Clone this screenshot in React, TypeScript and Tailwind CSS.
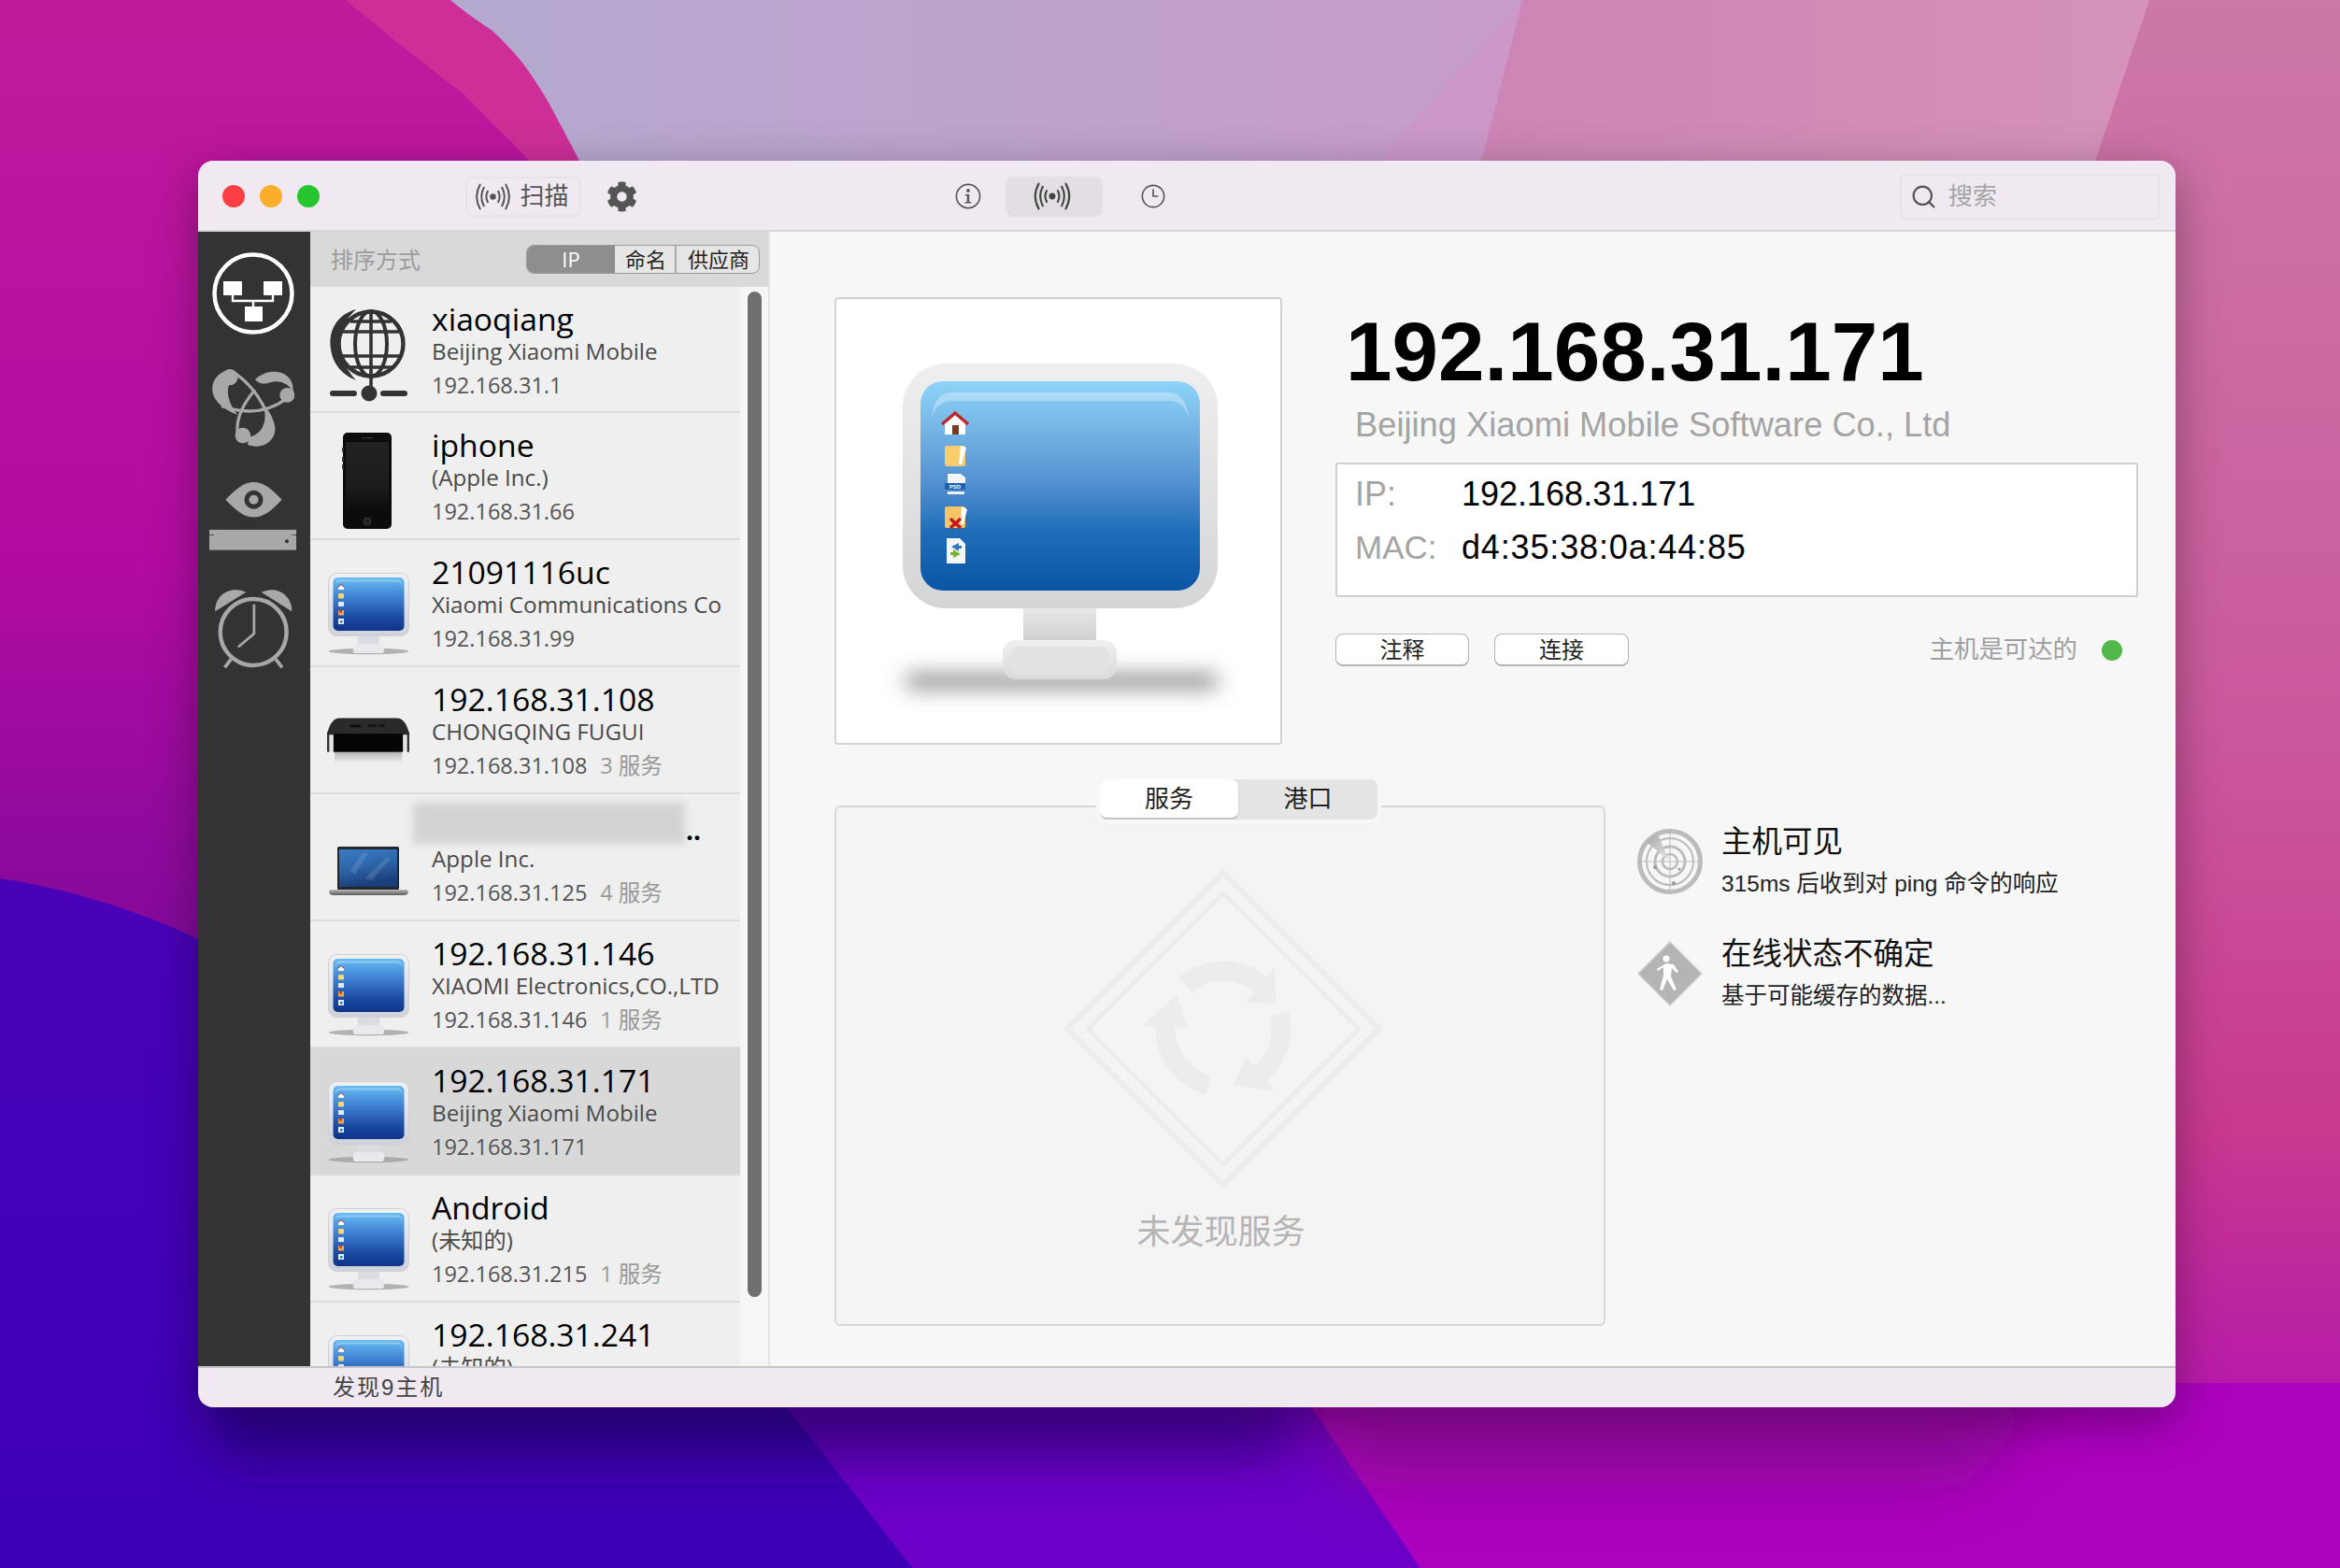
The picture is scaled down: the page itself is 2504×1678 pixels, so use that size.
import React from "react";
import { FaCog } from "react-icons/fa";
import { Clock3, Search } from "lucide-react";

function polar(a: number, r: number) {
  const t = ((a - 90) * Math.PI) / 180;
  return [170 + r * Math.cos(t), 170 + r * Math.sin(t)];
}

function arcArrow(from: number, to: number, tip: number) {
  const r = 62;
  const [x1, y1] = polar(from, r);
  const [x2, y2] = polar(to, r);
  const [ax, ay] = polar(to, r + 24);
  const [bx, by] = polar(to, r - 24);
  const [tx, ty] = polar(tip, r);
  return (
    <g>
      <path d={`M${x1} ${y1} A${r} ${r} 0 0 1 ${x2} ${y2}`} fill="none" stroke="#ececec" strokeWidth="21" />
      <path d={`M${ax} ${ay} L${bx} ${by} L${tx} ${ty}Z`} fill="#ececec" />
    </g>
  );
}

function Wallpaper() {
  return (
    <svg className="absolute inset-0" width="2504" height="1678" viewBox="0 0 2504 1678">
      <defs>
        <linearGradient id="lav" x1="0" y1="0" x2="1" y2="0">
          <stop offset="0" stopColor="#b4a9cf" />
          <stop offset="1" stopColor="#c79cc9" />
        </linearGradient>
        <linearGradient id="leftv" x1="0" y1="0" x2="0" y2="1">
          <stop offset="0" stopColor="#c01a9c" />
          <stop offset="0.6" stopColor="#b20ba2" />
          <stop offset="1" stopColor="#820a9a" />
        </linearGradient>
        <linearGradient id="rightv" x1="0" y1="0" x2="0" y2="1">
          <stop offset="0" stopColor="#cd78a9" />
          <stop offset="0.45" stopColor="#cb5a9d" />
          <stop offset="0.72" stopColor="#c8398f" />
          <stop offset="1" stopColor="#ad05bb" />
        </linearGradient>
        <linearGradient id="pinkv" x1="0" y1="0" x2="1" y2="0">
          <stop offset="0" stopColor="#cd85b6" />
          <stop offset="1" stopColor="#d592ba" />
        </linearGradient>
        <linearGradient id="blue" x1="0" y1="0" x2="0" y2="1">
          <stop offset="0" stopColor="#4a02b8" />
          <stop offset="1" stopColor="#3d00b5" />
        </linearGradient>
        <filter id="soft" x="-20%" y="-300%" width="140%" height="700%">
          <feGaussianBlur stdDeviation="30" />
        </filter>
      </defs>
      <rect width="2504" height="1678" fill="url(#rightv)" />
      <path d="M0 0H640V1010H212L0 940Z" fill="url(#leftv)" />
      <path d="M370 0L431 50L495 100L567 172V200H640V0Z" fill="#cd2f97" />
      <path d="M482 0C500 15 515 25 527 33C540 45 550 56 559 67C572 85 582 100 591 117C603 140 612 156 620 172V190H1640V0Z" fill="url(#lav)" />
      <path d="M1629 0L1581 190H1460Z" fill="#cb98c8" />
      <path d="M1629 0H2300L2236 190H1581Z" fill="url(#pinkv)" />
      <path d="M0 940C70 950 150 975 212 1005L822 1480L977 1678H0Z" fill="url(#blue)" />
      <path d="M822 1480H1386L1520 1678H977Z" fill="#6d00c8" />
      <path d="M1386 1480H2504V1678H1520Z" fill="#ab02bd" />
      <path d="M1390 1500H2200L2100 1590H1450Z" fill="#7b1184" opacity="0.6" filter="url(#soft)" />
      <path d="M230 1500H1380V1560H230Z" fill="#1c0060" opacity="0.6" filter="url(#soft)" />
    </svg>
  );
}

function Broadcast({ className }: { className?: string }) {
  return (
    <svg className={className} viewBox="0 0 40 28" fill="none" stroke="currentColor" strokeWidth="2" strokeLinecap="round">
      <circle cx="20" cy="14" r="3.2" fill="currentColor" stroke="none" />
      <path d="M14.5 8.5Q11.5 14 14.5 19.5M25.5 8.5Q28.5 14 25.5 19.5" />
      <path d="M10.5 4.5Q5.5 14 10.5 23.5M29.5 4.5Q34.5 14 29.5 23.5" />
      <path d="M6.5 1.5Q-0.5 14 6.5 26.5M33.5 1.5Q40.5 14 33.5 26.5" />
    </svg>
  );
}

function InfoIcon() {
  return (
    <svg className="w-[28px] h-[28px] text-[#555]" viewBox="0 0 28 28" fill="none">
      <circle cx="14" cy="14" r="12.6" stroke="currentColor" strokeWidth="1.6" />
      <circle cx="14" cy="8" r="1.9" fill="currentColor" />
      <path d="M10.8 12H15.2V20H17.4V21.4H10.6V20H12.8V13.4H10.8Z" fill="currentColor" />
    </svg>
  );
}

function NetworkIcon() {
  return (
    <svg className="w-[90px] h-[90px]" viewBox="0 0 90 90" fill="none">
      <circle cx="45" cy="45" r="41.5" stroke="#fff" strokeWidth="4.5" />
      <rect x="13" y="32" width="20" height="15" fill="#fff" />
      <rect x="56" y="32" width="20" height="15" fill="#fff" />
      <rect x="36" y="59" width="19" height="16" fill="#fff" />
      <path d="M23 45V53H66V45M45 53V60" stroke="#fff" strokeWidth="2.4" />
    </svg>
  );
}

function TrefoilIcon() {
  return (
    <svg className="w-[88px] h-[83px] mt-[36px]" viewBox="48 462 265 248" fill="#a8a8a8">
      <path d="M88 468C36 490 22 568 130 608C105 578 92 540 102 512Z" />
      <path d="M186 494C240 446 318 472 308 535C298 510 265 492 228 506C212 510 198 508 186 494Z" />
      <path d="M162 704C218 728 270 680 244 625C236 600 226 588 216 588C226 640 204 672 168 680Z" />
      <path d="M118 472C172 508 218 570 242 652" fill="none" stroke="#a8a8a8" strokeWidth="10" />
      <path d="M288 556C240 592 170 612 78 580" fill="none" stroke="#a8a8a8" strokeWidth="10" />
      <path d="M186 528C150 570 124 620 130 668" fill="none" stroke="#a8a8a8" strokeWidth="10" />
      <circle cx="105" cy="487" r="26" />
      <circle cx="290" cy="545" r="24" />
      <circle cx="147" cy="675" r="25" />
    </svg>
  );
}

function EyeServerIcon() {
  return (
    <svg className="w-[93px] h-[73px] mt-[38px]" viewBox="40 828 278 218">
      <path d="M92 884C125 850 150 828 182 828C214 828 240 850 272 884C240 918 214 940 182 940C150 940 125 918 92 884Z" fill="#a8a8a8" />
      <circle cx="182" cy="884" r="30" fill="#333" />
      <circle cx="182" cy="884" r="15" fill="#a8a8a8" />
      <rect x="40" y="980" width="278" height="65" fill="#a8a8a8" />
      <path d="M40 997H55M303 997H318" stroke="#555" strokeWidth="3" />
      <circle cx="288" cy="1017" r="6" fill="#333" />
    </svg>
  );
}

function AlarmIcon() {
  return (
    <svg className="w-[84px] h-[88px] mt-[38px]" viewBox="55 1170 245 258" fill="none">
      <circle cx="178" cy="1315" r="104" stroke="#a8a8a8" strokeWidth="13" />
      <path d="M180 1228V1320L130 1362" stroke="#a8a8a8" strokeWidth="8" />
      <path d="M58 1250C55 1205 100 1165 155 1190Z" fill="#a8a8a8" />
      <path d="M298 1250C302 1205 255 1165 203 1190Z" fill="#a8a8a8" />
      <path d="M108 1400L88 1426M248 1400L268 1426" stroke="#a8a8a8" strokeWidth="11" />
    </svg>
  );
}

function GlobeIcon() {
  return (
    <svg className="w-[83px] h-[103px] mt-[21px]" viewBox="0 0 83 103" fill="none" stroke="#333">
      <path d="M28 3C6 9-2 28 1 46C3 61 13 73 28 79C17 67 11 54 11 40C11 26 17 13 28 3Z" fill="#333" stroke="none" />
      <circle cx="44" cy="40" r="34.5" strokeWidth="4.4" />
      <ellipse cx="44" cy="40" rx="17" ry="35" strokeWidth="4" />
      <path d="M44 5V92M12 27H76M12 53H76M22 16H66M22 65H66" strokeWidth="3.6" />
      <circle cx="42" cy="93" r="8.5" fill="#333" stroke="none" />
      <rect x="0" y="90" width="29" height="6" rx="3" fill="#333" stroke="none" />
      <rect x="54" y="90" width="29" height="6" rx="3" fill="#333" stroke="none" />
    </svg>
  );
}

function PhoneIcon() {
  return (
    <svg className="w-[54px] h-[104px] mt-[21px] -ml-[2px]" viewBox="0 0 54 104">
      <defs>
        <linearGradient id="ph" x1="0" y1="0" x2="0" y2="1">
          <stop offset="0" stopColor="#222" />
          <stop offset="0.6" stopColor="#1c1c1c" />
          <stop offset="1" stopColor="#0a0a0a" />
        </linearGradient>
      </defs>
      <rect x="1" y="0" width="52" height="103" rx="5" fill="#0c0c0c" />
      <rect x="4" y="10" width="46" height="78" fill="url(#ph)" />
      <rect x="0" y="16" width="2" height="5" fill="#333" />
      <rect x="0" y="26" width="2" height="5" fill="#333" />
      <rect x="0" y="34" width="2" height="5" fill="#333" />
      <circle cx="27" cy="95" r="4" fill="#222" stroke="#3a3a3a" />
      <rect x="21" y="5" width="12" height="1.4" fill="#333" />
    </svg>
  );
}

function SmallMonitor() {
  return (
    <svg className="w-[87px] h-[89px] mt-[35px]" viewBox="0 0 87 89">
      <defs>
        <linearGradient id="sm" x1="0" y1="0" x2="0" y2="1">
          <stop offset="0" stopColor="#66bdf2" />
          <stop offset="0.35" stopColor="#4184d4" />
          <stop offset="0.75" stopColor="#1b4aa3" />
          <stop offset="1" stopColor="#0f3488" />
        </linearGradient>
        <linearGradient id="smf" x1="0" y1="0" x2="0" y2="1">
          <stop offset="0" stopColor="#f0f1f5" />
          <stop offset="1" stopColor="#cfd2da" />
        </linearGradient>
      </defs>
      <ellipse cx="43.5" cy="84" rx="43" ry="3.2" fill="#9c9c9c" opacity="0.75" />
      <rect x="0.5" y="0.5" width="86" height="67" rx="9" fill="url(#smf)" stroke="#cfcfd6" />
      <rect x="5.5" y="5" width="76" height="57" rx="5" fill="url(#sm)" />
      <path d="M8 13C8 9 10 7.5 13 7.5H74C77 7.5 79 9 79 13C78 10 76 9.5 74 9.5H13C11 9.5 9 10 8 13Z" fill="#fff" opacity="0.3" />
      <path d="M11 15.5L14 13L17 15.5V18H11Z" fill="#fff" />
      <path d="M10.5 15.5L14 12.5L17.5 15.5" fill="none" stroke="#b33" strokeWidth="1" />
      <rect x="11" y="22" width="6" height="5.5" rx="1" fill="#f4d675" />
      <rect x="11" y="31" width="6" height="5" fill="#dfe9f5" />
      <rect x="11" y="40" width="6" height="5.5" fill="#f2a54a" />
      <rect x="12" y="40" width="3" height="2.5" fill="#d33" />
      <rect x="11" y="49" width="6" height="6" fill="#e8eff7" />
      <rect x="13" y="51" width="2.5" height="2.5" fill="#2a7ac4" />
      <rect x="32" y="68" width="23" height="9" fill="#dcdde2" />
      <rect x="27" y="76" width="33" height="10" rx="2" fill="#e8e9ed" />
    </svg>
  );
}

function Laptop() {
  return (
    <svg className="w-[85px] h-[52px] mt-[56px]" viewBox="0 0 85 52">
      <defs>
        <linearGradient id="lp" x1="0" y1="0" x2="0.3" y2="1">
          <stop offset="0" stopColor="#3a7cc4" />
          <stop offset="0.5" stopColor="#2e66ab" />
          <stop offset="1" stopColor="#1b3f7a" />
        </linearGradient>
        <linearGradient id="lb" x1="0" y1="0" x2="0" y2="1">
          <stop offset="0" stopColor="#bbb" />
          <stop offset="1" stopColor="#5a5a5a" />
        </linearGradient>
      </defs>
      <rect x="9" y="0" width="66" height="46" rx="1.5" fill="#23262c" />
      <rect x="11" y="3" width="62" height="40" fill="url(#lp)" />
      <path d="M22 26L36 7L42 7L28 30ZM38 34L62 11L66 13L46 36Z" fill="#fff" opacity="0.12" />
      <path d="M1 46H84L85 49C85 50 83 52 80 52H5C2 52 0 50 0 49Z" fill="url(#lb)" />
    </svg>
  );
}

function AppleTv() {
  return (
    <svg className="w-[88px] h-[50px] mt-[54px]" viewBox="0 0 90 50">
      <defs>
        <linearGradient id="tvr" x1="0" y1="0" x2="0" y2="1">
          <stop offset="0" stopColor="#b5b5b5" />
          <stop offset="1" stopColor="#efefef" />
        </linearGradient>
      </defs>
      <rect x="8" y="37" width="74" height="12" fill="url(#tvr)" />
      <rect x="2" y="14" width="86" height="22" fill="#e4e4e4" />
      <rect x="0" y="15" width="2.4" height="22" fill="#333" />
      <rect x="87.6" y="15" width="2.4" height="22" fill="#333" />
      <path d="M0 18C2 8 6 0 14 0H76C84 0 88 8 90 18Z" fill="#2a2a2a" />
      <rect x="7" y="17" width="76" height="20" fill="#050505" />
      <rect x="25" y="7" width="12" height="3" rx="1.5" fill="#0a0a0a" />
      <rect x="45" y="7" width="9" height="2.4" fill="#111" />
      <rect x="56" y="7" width="7" height="2.4" fill="#111" />
    </svg>
  );
}

function BigMonitor() {
  return (
    <svg className="w-[339px] h-[361px] overflow-visible" viewBox="0 0 339 361">
      <defs>
        <linearGradient id="bf" x1="0" y1="0" x2="0" y2="1">
          <stop offset="0" stopColor="#efefef" />
          <stop offset="1" stopColor="#d4d5d7" />
        </linearGradient>
        <linearGradient id="bs" x1="0" y1="0" x2="0" y2="1">
          <stop offset="0" stopColor="#8dd4f8" />
          <stop offset="0.2" stopColor="#78b9e7" />
          <stop offset="0.5" stopColor="#508fd0" />
          <stop offset="0.72" stopColor="#1f6db8" />
          <stop offset="1" stopColor="#0b55a5" />
        </linearGradient>
        <linearGradient id="bt" x1="0" y1="0" x2="0" y2="1">
          <stop offset="0" stopColor="#e8e8e8" />
          <stop offset="1" stopColor="#cfcfcf" />
        </linearGradient>
        <linearGradient id="bb" x1="0" y1="0" x2="0" y2="1">
          <stop offset="0" stopColor="#f0f0f0" />
          <stop offset="1" stopColor="#d9d9d9" />
        </linearGradient>
        <filter id="bshadow" x="-10%" y="-250%" width="120%" height="600%">
          <feGaussianBlur stdDeviation="11" />
        </filter>
      </defs>
      <rect x="2" y="332" width="336" height="16" rx="8" fill="#888" filter="url(#bshadow)" />
      <rect x="0" y="0" width="337" height="262" rx="46" fill="url(#bf)" />
      <rect x="19" y="19" width="299" height="224" rx="24" fill="url(#bs)" />
      <path d="M31 59C32 42 38 31 54 31H284C298 31 305 42 306 59C303 48 298 40 284 40H54C40 40 34 48 31 59Z" fill="#fff" opacity="0.3" />
      <rect x="129" y="262" width="78" height="34" fill="url(#bt)" />
      <rect x="107" y="296" width="122" height="42" rx="14" fill="url(#bb)" />
      <rect x="115" y="303" width="106" height="30" rx="9" fill="#e2e2e2" />
      {/* mini desktop icons */}
      <path d="M45 64L56 55L67 64V76H45Z" fill="#fff" />
      <path d="M42 65L56 53L70 65" fill="none" stroke="#c0272d" strokeWidth="3.4" />
      <rect x="53" y="66" width="7" height="10" fill="#7a3b22" />
      <rect x="45" y="88" width="22" height="22" rx="2" fill="#f7cd6e" />
      <path d="M62 88L68 90L63 108H60Z" fill="#fff" />
      <path d="M48 118H62L67 122V128H48Z" fill="#f2f4f7" />
      <rect x="45" y="128" width="22" height="7" fill="#1f5fae" />
      <rect x="48" y="137" width="18" height="3" fill="#eef1f5" />
      <text x="56" y="134" textAnchor="middle" fontSize="6" fontWeight="700" fill="#fff" fontFamily="Liberation Sans">PSD</text>
      <rect x="45" y="153" width="22" height="23" rx="2" fill="#f4c566" />
      <path d="M63 153L69 156L65 172L62 172Z" fill="#fff" />
      <path d="M51 166L62 176M62 166L51 176" stroke="#c4161c" strokeWidth="3.4" />
      <path d="M47 187H61L67 193V214H47Z" fill="#f4f6f8" />
      <path d="M52 196L60 192V195H63V198H60V201Z" fill="#2b7cc4" />
      <path d="M62 204L54 208V205H51V202H54V199Z" fill="#78b43a" />
    </svg>
  );
}

function RadarIcon() {
  return (
    <svg className="w-[70px] h-[70px] mt-[6px] shrink-0" viewBox="0 0 70 70" fill="none" stroke="#bbb">
      <defs>
        <linearGradient id="rw" x1="0" y1="0" x2="1" y2="1">
          <stop offset="0" stopColor="#a9a9a9" />
          <stop offset="1" stopColor="#e6e6e6" />
        </linearGradient>
      </defs>
      <circle cx="35" cy="35" r="32.5" strokeWidth="5" />
      <circle cx="35" cy="35" r="25" strokeWidth="2" />
      <circle cx="35" cy="35" r="16" strokeWidth="3" />
      <circle cx="35" cy="35" r="8" strokeWidth="2.5" />
      <path d="M35 3V67M3 35H67" strokeWidth="1" />
      <path d="M35 35L10 14A32 32 0 0 1 22 6Z" fill="url(#rw)" stroke="none" />
      <circle cx="19" cy="41" r="2" fill="#999" stroke="none" />
      <circle cx="45" cy="43" r="1.6" fill="#999" stroke="none" />
      <circle cx="39" cy="58" r="2" fill="#999" stroke="none" />
    </svg>
  );
}

function WalkIcon() {
  return (
    <svg className="w-[70px] h-[70px] mt-[6px] shrink-0" viewBox="0 0 70 70">
      <path d="M35 1L69 35L35 69L1 35Z" fill="#b4b4b4" stroke="#d0d0d0" strokeWidth="1.5" strokeLinejoin="round" />
      <circle cx="31" cy="19" r="3.6" fill="#fff" />
      <path d="M31 24L39 25L44 33L42 34L37 29L36 38L42 52L39 53L32 41L27 53L24 52L28 37L28 28L22 32L21 30Z" fill="#fff" />
    </svg>
  );
}

function DiamondArt() {
  return (
    <svg className="ml-[6px] w-[340px] h-[340px]" viewBox="0 0 340 340" fill="none">
      <path d="M170 3L337 170L170 337L3 170Z" stroke="#ececec" strokeWidth="6" strokeLinejoin="round" />
      <path d="M170 25L315 170L170 315L25 170Z" stroke="#ececec" strokeWidth="5" strokeLinejoin="round" />
      {arcArrow(-41, 40, 65)}
      {arcArrow(75, 140, 170)}
      {arcArrow(195, 272, 307)}
    </svg>
  );
}

const rows = [
  { name: "xiaoqiang", vendor: "Beijing Xiaomi Mobile", ip: "192.168.31.1", icon: <GlobeIcon /> },
  { name: "iphone", vendor: "(Apple Inc.)", ip: "192.168.31.66", icon: <PhoneIcon /> },
  { name: "21091116uc", vendor: "Xiaomi Communications Co", ip: "192.168.31.99", icon: <SmallMonitor /> },
  { name: "192.168.31.108", vendor: "CHONGQING FUGUI", ip: "192.168.31.108", services: "3 服务", icon: <AppleTv /> },
  { name: "", vendor: "Apple Inc.", ip: "192.168.31.125", services: "4 服务", icon: <Laptop />, blur: true },
  { name: "192.168.31.146", vendor: "XIAOMI Electronics,CO.,LTD", ip: "192.168.31.146", services: "1 服务", icon: <SmallMonitor /> },
  { name: "192.168.31.171", vendor: "Beijing Xiaomi Mobile", ip: "192.168.31.171", icon: <SmallMonitor />, selected: true },
  { name: "Android", vendor: "(未知的)", ip: "192.168.31.215", services: "1 服务", icon: <SmallMonitor /> },
  { name: "192.168.31.241", vendor: "(未知的)", ip: "", icon: <SmallMonitor /> },
];

function HostRow({ row, first }: { row: (typeof rows)[number]; first: boolean }) {
  return (
    <div
      className={`relative flex shrink-0 border-b-2 border-[#dcdcdc] ${first ? "h-[135px]" : "h-[136px]"} ${
        row.selected ? "bg-[#d8d8d8]" : "bg-[#efefef]"
      }`}
    >
      <div className="flex w-[130px] justify-center pr-[6px]">{row.icon}</div>
      <div className="pt-[16px] whitespace-nowrap">
        <div className="h-[36px] text-[33.7px] leading-[36px] text-black">{row.name}</div>
        <div className="h-[34px] text-[24.2px] leading-[34px] text-[#4a4a4a]">{row.vendor}</div>
        <div className="h-[36px] pt-[1px] text-[23.5px] leading-[36px] text-[#555]">
          {row.ip}
          {row.services && <span className="ml-[14px] text-[#999]">{row.services}</span>}
        </div>
      </div>
      {row.blur && (
        <>
          <div className="absolute left-[110px] top-[9px] h-[44px] w-[291px] bg-[#d3d3d3] blur-[4px]" />
          <div className="absolute left-[402px] top-[24px] text-[28px] font-bold leading-[28px] text-black">..</div>
        </>
      )}
    </div>
  );
}

function Sidebar() {
  return (
    <div className="flex w-[120px] shrink-0 flex-col items-center bg-[#333] pr-[3px] pt-[21px]">
      <NetworkIcon />
      <TrefoilIcon />
      <EyeServerIcon />
      <AlarmIcon />
    </div>
  );
}

function HostList() {
  return (
    <div className="flex h-full w-[490px] shrink-0 flex-col font-['Open_Sans','Noto_Sans_CJK_SC',sans-serif]">
      <div className="flex h-[59px] shrink-0 items-center bg-[#d9d9d9] pl-[22px] pr-[9px]">
        <span className="pt-[1px] text-[24px] text-[#9c9c9c]">排序方式</span>
        <div className="ml-auto flex h-[31px] overflow-hidden rounded-[8px] border border-[#9a9a9a] bg-[#e6e6e6] text-[22px] leading-[29px] text-[#222]">
          <div className="w-[94px] bg-[#8e8e8e] text-center text-white">IP</div>
          <div className="w-[66px] border-r-2 border-[#aaa] pl-[2px] text-center">命名</div>
          <div className="w-[88px] pl-[2px] text-center">供应商</div>
        </div>
      </div>
      <div className="flex min-h-0 flex-1 bg-[#f6f6f6]">
        <div className="flex w-[460px] flex-col overflow-hidden">
          {rows.map((row, i) => (
            <HostRow key={i} row={row} first={i === 0} />
          ))}
        </div>
        <div className="flex-1 pl-[8px] pt-[5px]">
          <div className="h-[1076px] w-[15px] rounded-full bg-[#6f6f6f]" />
        </div>
      </div>
    </div>
  );
}

function DetailPane() {
  return (
    <div className="flex min-w-0 flex-1 flex-col border-l-2 border-[#e4e4e4] bg-[#f7f7f7] pl-[69px] pt-[70px]">
      <div className="flex">
        <div className="flex h-[479px] w-[479px] shrink-0 items-start justify-start rounded-[4px] border-2 border-[#d2d2d2] bg-white pl-[71px] pt-[69px]">
          <BigMonitor />
        </div>
        <div className="ml-[57px] w-[859px]">
          <div className="ml-[11px] mt-[13px] h-[90px] text-[89px] font-bold leading-[90px] text-black">192.168.31.171</div>
          <div className="ml-[21px] mt-[16px] h-[36px] text-[36.3px] leading-[36px] text-[#a4a4a4]">Beijing Xiaomi Mobile Software Co., Ltd</div>
          <div className="mt-[22px] h-[144px] rounded-[3px] border-2 border-[#cfcfcf] bg-white pl-[19px] pt-[3px] text-[36px] leading-[57px]">
            <div className="flex h-[57px]">
              <span className="w-[114px] text-[#a4a4a4]">IP:</span>
              <span className="text-black">192.168.31.171</span>
            </div>
            <div className="flex h-[57px]">
              <span className="w-[114px] text-[35px] text-[#a4a4a4]">MAC:</span>
              <span className="tracking-[0.85px] text-black">d4:35:38:0a:44:85</span>
            </div>
          </div>
          <div className="mt-[39px] flex items-center">
            <button className="h-[35px] w-[143px] rounded-[8px] border border-b-2 border-[#b4b4b4] bg-white pt-[2px] text-[24px] leading-[30px] text-[#222]">注释</button>
            <button className="ml-[27px] h-[35px] w-[144px] rounded-[8px] border border-b-2 border-[#b4b4b4] bg-white pt-[2px] text-[24px] leading-[30px] text-[#222]">连接</button>
            <span className="ml-auto text-[26.4px] leading-[35px] text-[#a0a0a0]">主机是可达的</span>
            <span className="ml-[26px] mr-[17px] h-[22px] w-[22px] rounded-full bg-[#4fb848]" />
          </div>
        </div>
      </div>
      <div className="mt-[65px] flex">
        <div className="relative h-[557px] w-[825px] shrink-0 rounded-[6px] border-2 border-[#d8d8d8] bg-[#f4f4f4]">
          <div className="absolute left-[282px] top-[-30px] flex h-[43px] w-[297px] overflow-hidden rounded-[8px] bg-[#e4e4e4] text-[26px] leading-[43px] text-[#222] ring-4 ring-[#f7f7f7]">
            <div className="w-[148px] rounded-[8px] border-b-2 border-[#c4c4c4] bg-white text-center shadow-sm">服务</div>
            <div className="flex-1 text-center">港口</div>
          </div>
          <div className="flex flex-col items-center pt-[67px]">
            <DiamondArt />
            <div className="ml-[2px] mt-[24px] text-[36px] leading-[48px] text-[#b5b5b5]">未发现服务</div>
          </div>
        </div>
        <div className="ml-[34px] pt-[19px]">
          <div className="flex h-[120px]">
            <RadarIcon />
            <div className="ml-[20px]">
              <div className="h-[40px] text-[32.5px] leading-[40px] text-[#111]">主机可见</div>
              <div className="mt-[7px] h-[36px] text-[24.5px] leading-[36px] text-[#222]">315ms 后收到对 ping 命令的响应</div>
            </div>
          </div>
          <div className="flex h-[119px]">
            <WalkIcon />
            <div className="ml-[20px]">
              <div className="h-[40px] text-[32.5px] leading-[40px] text-[#111]">在线状态不确定</div>
              <div className="mt-[7px] h-[36px] text-[24.5px] leading-[36px] text-[#222]">基于可能缓存的数据...</div>
            </div>
          </div>
        </div>
      </div>
    </div>
  );
}

export default function App(): React.JSX.Element {
  return (
    <div className="relative h-[1678px] w-[2504px] overflow-hidden font-['Liberation_Sans','Noto_Sans_CJK_SC',sans-serif]">
      <Wallpaper />
      <div className="relative pl-[212px] pt-[172px]">
        <div className="flex h-[1334px] w-[2116px] flex-col overflow-hidden rounded-[16px] shadow-[0_14px_50px_rgba(0,0,0,0.35)]">
          <div className="flex h-[76px] shrink-0 items-center border-b-2 border-[#d9d3da] bg-[#f0e9f2] pl-[26px] pr-[17px] pt-[2px]">
            <span className="h-[24px] w-[24px] rounded-full bg-[#fb3f45]" />
            <span className="ml-[16px] h-[24px] w-[24px] rounded-full bg-[#fbae2c]" />
            <span className="ml-[16px] h-[24px] w-[24px] rounded-full bg-[#27c52f]" />
            <div className="ml-[156px] flex h-[43px] w-[124px] items-center justify-center gap-[8px] rounded-[8px] border-2 border-[#e8e1ea] text-[26px] text-[#555]">
              <Broadcast className="-ml-[4px] h-[29px] w-[41px] text-[#555]" />
              扫描
            </div>
            <FaCog className="ml-[27px] h-[33px] w-[33px] text-[#555]" />
            <div className="ml-[340px]">
              <InfoIcon />
            </div>
            <div className="ml-[26px] flex h-[43px] w-[104px] items-center justify-center rounded-[8px] bg-[#e3dee4] pr-[4px]">
              <Broadcast className="h-[30px] w-[44px] text-[#444]" />
            </div>
            <Clock3 className="ml-[40px] h-[28px] w-[28px] text-[#555]" strokeWidth={1.4} />
            <div className="ml-auto flex h-[49px] w-[278px] items-center rounded-[6px] border-2 border-[#e8e1ea] pl-[9px] text-[26px] text-[#a6a6a6]">
              <Search className="h-[29px] w-[29px] text-[#555]" strokeWidth={1.8} />
              <span className="ml-[12px]">搜索</span>
            </div>
          </div>
          <div className="flex min-h-0 flex-1 bg-[#333]">
            <Sidebar />
            <HostList />
            <DetailPane />
          </div>
          <div className="flex h-[44px] shrink-0 items-center border-t-2 border-[#c9c5ce] bg-[#f0e9f2] pl-[144px] text-[24px] tracking-[2px] text-[#444]">
            发现9主机
          </div>
        </div>
      </div>
    </div>
  );
}
